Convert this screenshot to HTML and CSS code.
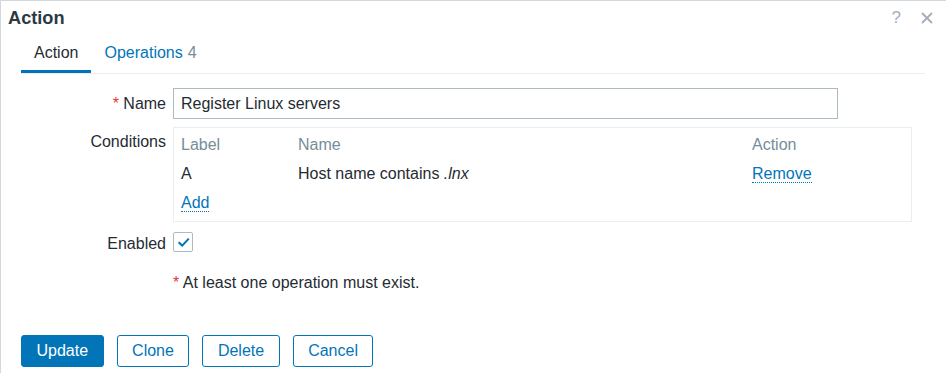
FILE: index.html
```html
<!DOCTYPE html>
<html lang="en">
<head>
<meta charset="utf-8">
<title>Action</title>
<link rel="stylesheet" href="styles.css">
</head>
<body>
<div class="dialog">
  <div class="head">
    <h4 class="title">Action</h4>
    <span class="help">?</span>
    <svg class="close" width="12" height="12" viewBox="0 0 12 12"><path d="M1 1 L11 11 M11 1 L1 11" stroke="#a3aeb7" stroke-width="1.8" fill="none"/></svg>
  </div>
  <div class="tabs">
    <div class="tab active">Action</div>
    <div class="tab">Operations<span class="count">4</span></div>
  </div>
  <div class="form">
    <label class="lbl"><span class="req">*</span> Name</label>
    <div class="field"><input class="text-input" type="text" value="Register Linux servers"></div>

    <label class="lbl lbl-cond">Conditions</label>
    <div class="field">
      <div class="cond">
        <div class="cond-row head-row"><span>Label</span><span>Name</span><span>Action</span></div>
        <div class="cond-row"><span>A</span><span>Host name contains <i>.lnx</i></span><span><a class="link">Remove</a></span></div>
        <div class="cond-row"><span><a class="link">Add</a></span></div>
      </div>
    </div>

    <label class="lbl lbl-check">Enabled</label>
    <div class="field"><span class="checkbox"><svg width="18" height="18" viewBox="0 0 18 18"><path d="M4.6 9.2 L8.2 12.6 L14.8 5.6" stroke="#0275b8" stroke-width="2.1" fill="none"/></svg></span></div>

    <div class="msg"><span class="req">*</span> At least one operation must exist.</div>
  </div>
  <div class="footer">
    <button class="btn primary">Update</button>
    <button class="btn alt">Clone</button>
    <button class="btn alt">Delete</button>
    <button class="btn alt">Cancel</button>
  </div>
</div>
</body>
</html>
```
FILE: styles.css
```css
* { box-sizing: border-box; }
html, body { margin: 0; padding: 0; background: #fff; }
body {
  font-family: "Liberation Sans", Arial, sans-serif;
  font-size: 16px;
  line-height: 18px;
  color: #1f2c33;
}
.dialog {
  height: 373px;
  border-top: 1px solid #d1d9de;
  border-left: 1px solid #d1d9de;
  overflow: hidden;
}
.head {
  display: flex;
  align-items: flex-start;
  height: 29px;
  padding: 6px 13px 0 7px;
}
.title {
  flex: 1;
  margin: 0;
  font-size: 18.2px;
  line-height: 22px;
  font-weight: bold;
  color: #2c3a44;
}
.help {
  font-size: 17px;
  line-height: 22px;
  color: #a3aeb7;
}
.close {
  margin: 5px 0 0 20px;
}
.tabs {
  display: flex;
  margin: 14px 21px 0 20px;
  border-bottom: 1px solid #ebeef0;
}
.tab {
  padding: 0 13px 8px;
  border-bottom: 3px solid transparent;
  color: #0275b8;
}
.tab.active {
  color: #1f2c33;
  border-bottom-color: #0275b8;
}
.count {
  color: #768d99;
  margin-left: 5px;
}
.form {
  display: grid;
  grid-template-columns: 145px 1fr;
  column-gap: 7px;
  row-gap: 8px;
  margin: 14px 0 0 20px;
}
.lbl {
  text-align: right;
  padding-top: 7px;
}
.lbl-cond { padding-top: 6px; }
.lbl-check { padding-top: 5px; }
.req { color: #e33734; }
.text-input {
  display: block;
  width: 665px;
  height: 31px;
  margin: 0;
  padding: 0 7px;
  border: 1px solid #acbbc2;
  border-radius: 0;
  font: inherit;
  color: #1f2c33;
  background: #fff;
  outline: none;
}
.cond {
  width: 739px;
  border: 1px solid #ebeef0;
  padding: 2px 7px 4px;
}
.cond-row {
  display: grid;
  grid-template-columns: 117px 454px 1fr;
  padding: 5.5px 0;
}
.head-row { color: #768d99; }
.link {
  color: #0275b8;
  border-bottom: 1px dotted #0275b8;
  cursor: pointer;
}
.checkbox {
  display: flex;
  align-items: center;
  justify-content: center;
  width: 20px;
  height: 20px;
  margin-top: 2px;
  border: 1px solid #acbbc2;
  border-radius: 2px;
}
.msg {
  grid-column: 2;
  padding-top: 13px;
}
.footer {
  display: flex;
  gap: 13px;
  margin: 43px 0 0 20px;
}
.btn {
  height: 32px;
  margin: 0;
  padding: 0 14.5px;
  border: 1px solid #0275b8;
  border-radius: 3px;
  font: inherit;
  line-height: 18px;
  cursor: pointer;
}
.btn.primary {
  background: #0275b8;
  color: #fff;
}
.btn.alt {
  background: #fff;
  color: #0275b8;
}
```
